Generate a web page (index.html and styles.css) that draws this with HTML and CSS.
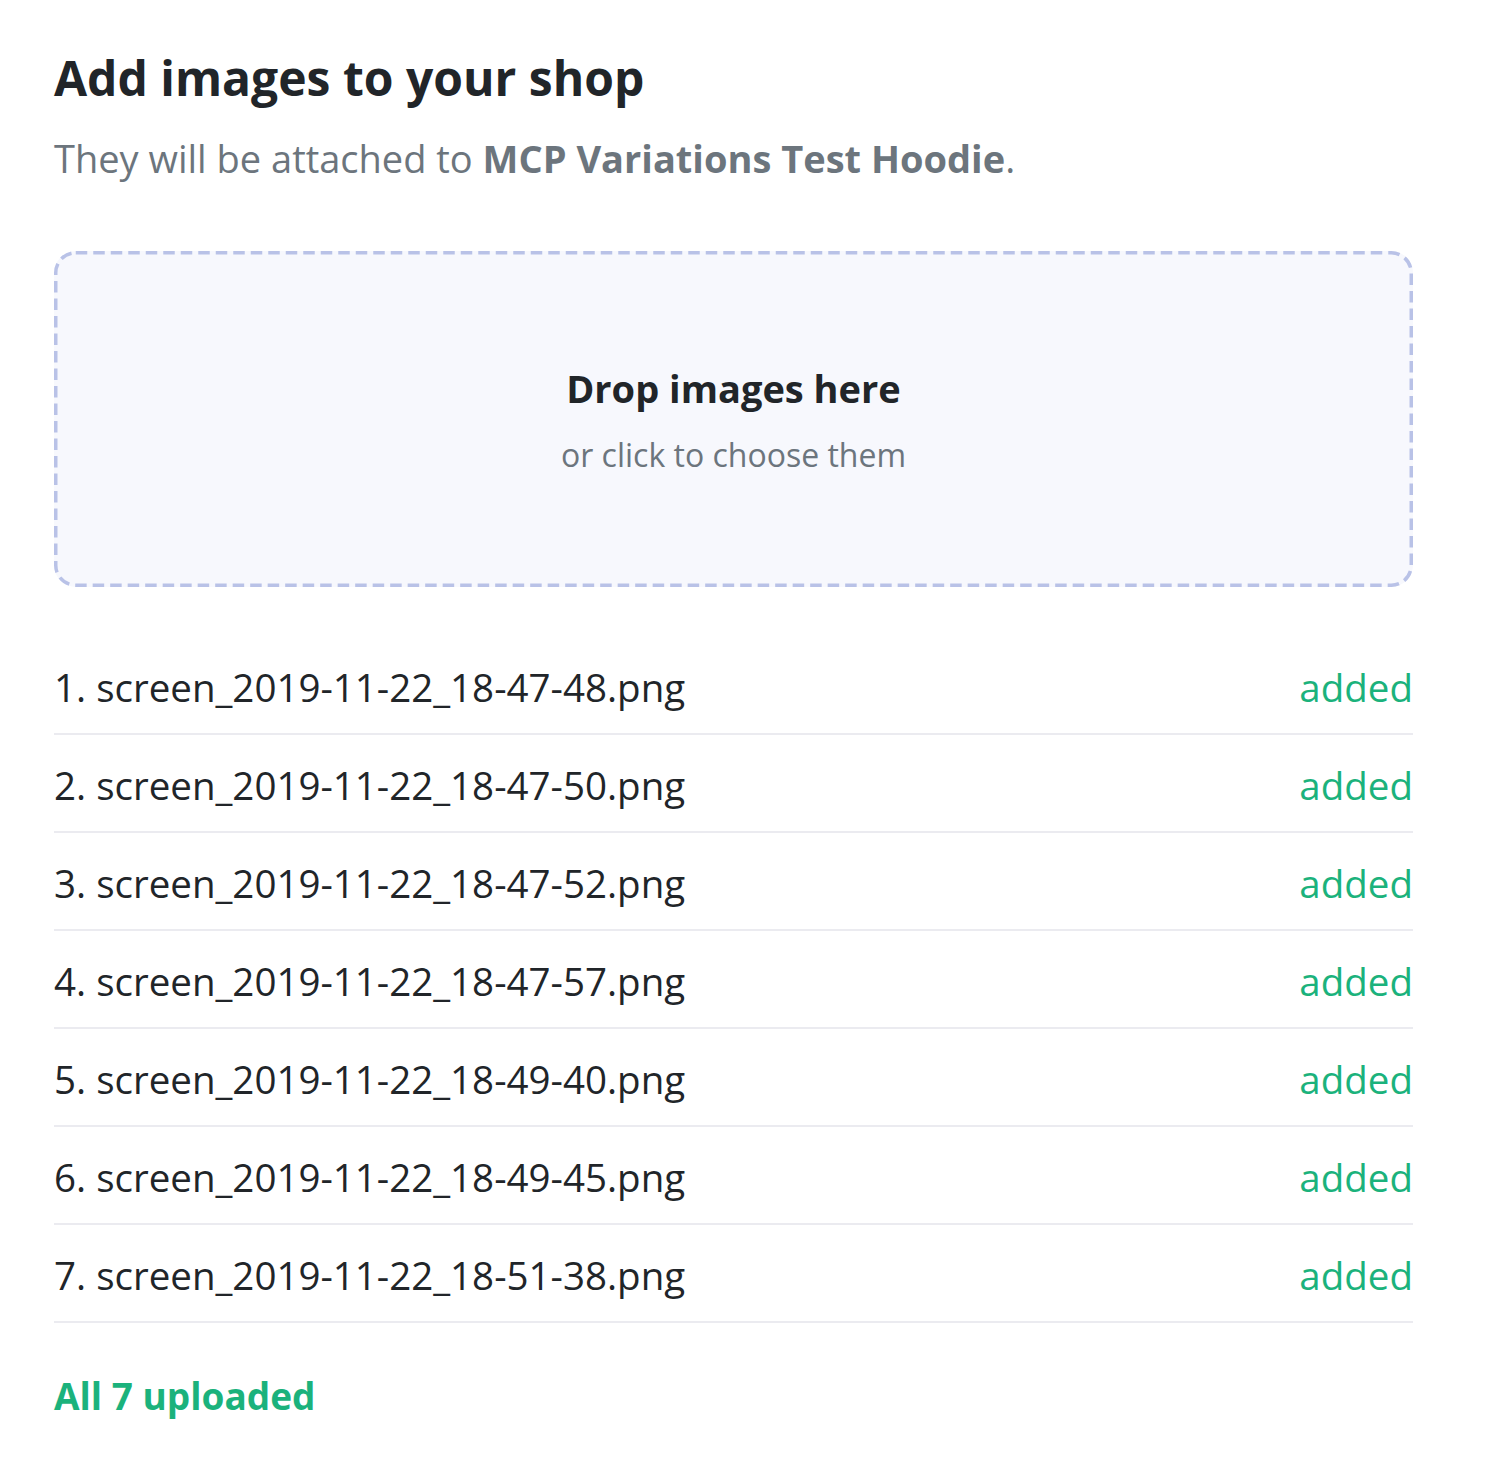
FILE: index.html
```html
<!DOCTYPE html>
<html>
<head>
<meta charset="utf-8">
<link rel="stylesheet" href="styles.css">
</head>
<body>
<main class="page">
  <h1 class="title">Add images to your shop</h1>
  <p class="subtitle">They will be attached to <strong>MCP Variations Test Hoodie</strong>.</p>
  <div class="dropzone">
    <svg class="dz-border" width="1359" height="336" viewBox="0 0 1359 336" aria-hidden="true">
      <rect x="1.75" y="1.75" width="1355.5" height="332.5" rx="20" ry="20" fill="none" stroke="#b9c2e7" stroke-width="3.5" stroke-dasharray="11.5 6"/>
    </svg>
    <div class="drop-title">Drop images here</div>
    <div class="drop-sub">or click to choose them</div>
  </div>
  <ul class="files">
    <li class="file"><span class="name">1. screen_2019-11-22_18-47-48.png</span><span class="status">added</span></li>
    <li class="file"><span class="name">2. screen_2019-11-22_18-47-50.png</span><span class="status">added</span></li>
    <li class="file"><span class="name">3. screen_2019-11-22_18-47-52.png</span><span class="status">added</span></li>
    <li class="file"><span class="name">4. screen_2019-11-22_18-47-57.png</span><span class="status">added</span></li>
    <li class="file"><span class="name">5. screen_2019-11-22_18-49-40.png</span><span class="status">added</span></li>
    <li class="file"><span class="name">6. screen_2019-11-22_18-49-45.png</span><span class="status">added</span></li>
    <li class="file"><span class="name">7. screen_2019-11-22_18-51-38.png</span><span class="status">added</span></li>
  </ul>
  <div class="summary">All 7 uploaded</div>
</main>
</body>
</html>
```

FILE: styles.css
```css
html, body {
  margin: 0;
  padding: 0;
  background: #ffffff;
}
body {
  font-family: "Open Sans", "Noto Sans", sans-serif;
  color: #212529;
}
.page {
  width: 1359px;
  margin-left: 54px;
  padding-top: 40px;
}
.title {
  margin: 0;
  font-size: 48px;
  line-height: 76px;
  font-weight: 700;
  color: #212529;
}
.subtitle {
  margin: 4px 0 0 0;
  font-size: 38px;
  line-height: 76px;
  color: #6c757d;
}
.subtitle strong {
  font-weight: 700;
}
.dropzone {
  position: relative;
  margin-top: 55px;
  height: 336px;
  box-sizing: border-box;
  padding-top: 4px;
  border-radius: 22px;
  background: #f7f8fd;
  display: flex;
  flex-direction: column;
  align-items: center;
  justify-content: center;
}
.dz-border {
  position: absolute;
  left: 0;
  top: 0;
}
.drop-title {
  font-size: 38px;
  font-weight: 700;
  line-height: 48px;
  color: #212529;
}
.drop-sub {
  font-size: 32px;
  line-height: 48px;
  margin-top: 19px;
  color: #6c757d;
}
.files {
  list-style: none;
  margin: 50px 0 0 0;
  padding: 0;
}
.file {
  box-sizing: border-box;
  height: 98px;
  padding-top: 4px;
  border-bottom: 2px solid #ebebf0;
  display: flex;
  align-items: center;
  justify-content: space-between;
  font-size: 38.5px;
}
.name {
  color: #212529;
}
.status {
  color: #1bb27c;
}
.summary {
  margin-top: 47px;
  font-size: 37px;
  font-weight: 700;
  color: #1bb27c;
}
```
